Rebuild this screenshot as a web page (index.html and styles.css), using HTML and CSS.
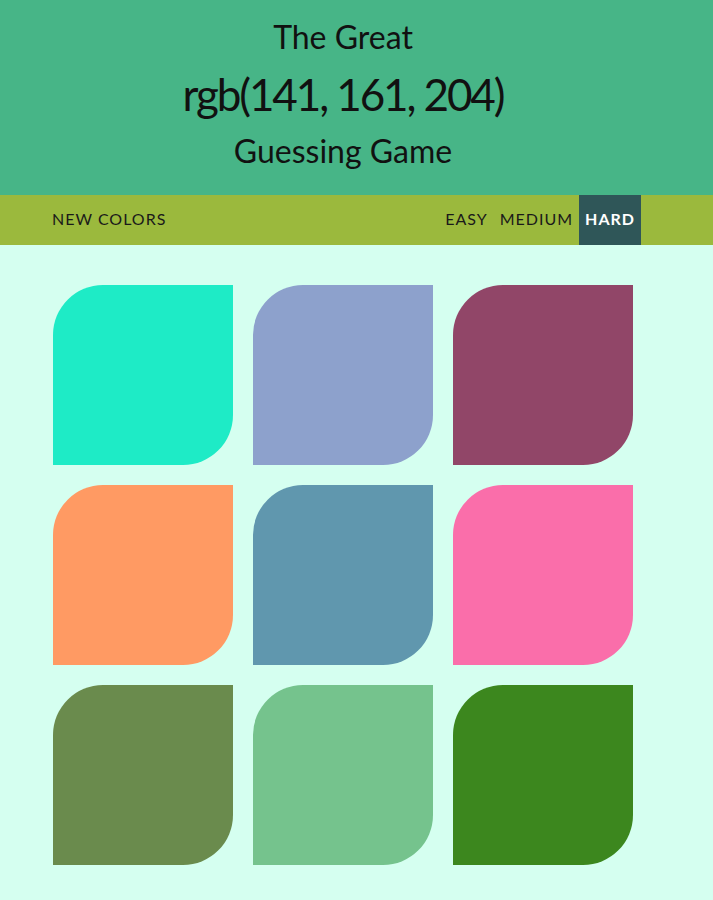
FILE: index.html
```html
<!DOCTYPE html>
<html>
<head>
<meta charset="utf-8">
<link rel="stylesheet" href="styles.css">
</head>
<body>
<header class="header">
  <div class="line small">The Great</div>
  <div class="line big">rgb(141, 161, 204)</div>
  <div class="line small">Guessing Game</div>
</header>
<nav class="nav">
  <div class="nav-inner">
    <button class="btn">NEW COLORS</button>
    <div class="spacer"></div>
    <button class="btn">EASY</button>
    <button class="btn">MEDIUM</button>
    <button class="btn selected">HARD</button>
  </div>
</nav>
<main class="grid">
  <div class="sq c1"></div>
  <div class="sq c2"></div>
  <div class="sq c3"></div>
  <div class="sq c4"></div>
  <div class="sq c5"></div>
  <div class="sq c6"></div>
  <div class="sq c7"></div>
  <div class="sq c8"></div>
  <div class="sq c9"></div>
</main>
</body>
</html>
```
FILE: styles.css
```css
html, body { margin: 0; padding: 0; }
body {
  background: #d5fff0;
  font-family: "Lato", "Open Sans", sans-serif;
  color: #111;
  width: 713px;
  height: 900px;
  overflow: hidden;
}
.header {
  background: #47b587;
  height: 195px;
  display: flex;
  flex-direction: column;
  align-items: center;
  padding: 17px 27px 0 0;
  box-sizing: border-box;
}
.line { line-height: 1; }
.small { font-size: 32px; height: 40px; display: flex; align-items: center; }
.big { font-size: 44px; height: 74px; display: flex; align-items: center; letter-spacing: -2.1px; }
.nav {
  background: #9bb93d;
  height: 50px;
}
.nav-inner {
  width: 600px;
  margin-left: 43px;
  height: 50px;
  display: flex;
  align-items: stretch;
}
.spacer { flex: 1; }
.btn {
  background: none;
  border: none;
  font-family: "Lato", sans-serif;
  font-size: 16px;
  letter-spacing: 1px;
  color: #1a1a1a;
  padding: 0 6px 3px;
  height: 50px;
  cursor: pointer;
}
.btn:first-child { padding-left: 9px; }
.btn.selected {
  background: #2f5658;
  color: #fff;
  font-weight: 700;
  padding: 0 6px 3px;
  margin-right: 2px;
}
.grid {
  width: 600px;
  margin: 30px 0 0 43px;
  display: grid;
  grid-template-columns: repeat(3, 180px);
  gap: 20px;
  padding: 10px;
  box-sizing: border-box;
}
.sq {
  width: 180px;
  height: 180px;
  border-radius: 50px 0 50px 0;
}
.c1 { background: #1eebc6; }
.c2 { background: #8da1cc; }
.c3 { background: #914668; }
.c4 { background: #ff9a63; }
.c5 { background: #6097ae; }
.c6 { background: #fa6eaa; }
.c7 { background: #6a8b4d; }
.c8 { background: #75c38d; }
.c9 { background: #3c871e; }
```
